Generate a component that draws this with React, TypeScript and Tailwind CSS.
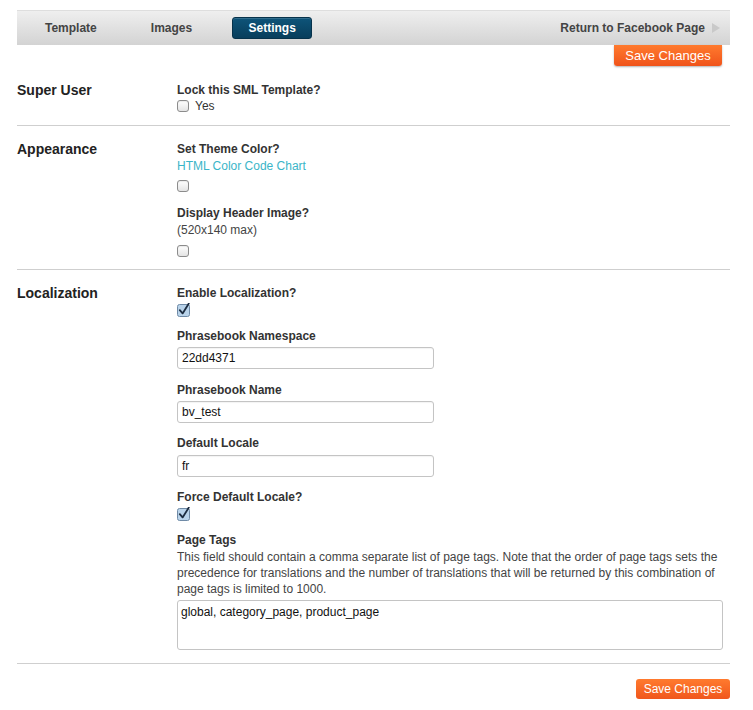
import React from "react";

const font = { fontFamily: '"Liberation Sans", Arial, Helvetica, sans-serif' };

function Checkbox({ checked }: { checked?: boolean }) {
  if (checked) {
    return (
      <svg width="14" height="14" viewBox="0 0 14 14" className="block">
        <rect x="0.5" y="1.5" width="12" height="12" rx="2" fill="#b9d3ea" stroke="#6f8aa6" />
        <path d="M2.8 7.2 L5.6 10.4 L11.8 0.6" fill="none" stroke="#1c2c40" strokeWidth="1.8" strokeLinecap="round" strokeLinejoin="round" />
      </svg>
    );
  }
  return (
    <span className="block w-[12px] h-[12px] rounded-[3px] border border-[#8c8c8c] bg-gradient-to-b from-[#ffffff] to-[#e4e4e4] shadow-[inset_0_1px_1px_rgba(0,0,0,0.08)]" />
  );
}

function Label({ children }: { children: React.ReactNode }) {
  return <div className="h-4 leading-4 text-[12px] font-bold text-[#333]">{children}</div>;
}

function TextInput({ value }: { value: string }) {
  return (
    <div className="w-[257px] h-[22px] border border-[#c4c4c4] rounded-[3px] bg-white flex items-center px-[4px] text-[12px] text-[#111] shadow-[inset_0_1px_1px_rgba(0,0,0,0.05)]">
      {value}
    </div>
  );
}

function Section({
  title,
  children,
  className,
}: {
  title: string;
  children: React.ReactNode;
  className: string;
}) {
  return (
    <div className={`flex ${className}`}>
      <div className="w-[160px] shrink-0 text-[14px] leading-4 font-bold text-[#222]">{title}</div>
      <div className="flex-1">{children}</div>
    </div>
  );
}

export default function App() {
  return (
    <div className="w-[753px] h-[710px] bg-white text-[#333]" style={font}>
      <div className="pt-[10px] pl-[17px] w-[730px]">
        {/* top nav bar */}
        <div className="h-[35px] border-t border-[#dedede] bg-gradient-to-b from-[#efefef] to-[#d3d3d3] flex items-center text-[12px] font-bold text-[#444]">
          <span className="ml-[28px]">Template</span>
          <span className="ml-[54px]">Images</span>
          <span className="ml-[40px] w-[80px] h-[22px] rounded-[3px] bg-gradient-to-b from-[#0e5479] to-[#083e5c] border border-[#06324b] text-white flex items-center justify-center shadow-[inset_0_1px_0_rgba(255,255,255,0.15)]">
            Settings
          </span>
          <span className="ml-auto">Return to Facebook Page</span>
          <svg width="8" height="10" viewBox="0 0 8 10" className="ml-[7px] mr-[10px]">
            <path d="M0 0 L8 5 L0 10 Z" fill="#c9c9c9" />
          </svg>
        </div>

        <div className="flex justify-end pr-[8px]">
          <button className="w-[108px] h-[21px] rounded-b-[3px] bg-gradient-to-b from-[#ff7a2e] to-[#f0531a] text-white text-[13px] leading-[21px] shadow-[0_1px_2px_rgba(0,0,0,0.3)]">
            Save Changes
          </button>
        </div>

        {/* Super User */}
        <Section title="Super User" className="pt-[16px] pb-[11px] border-b border-[#cfcfcf]">
          <Label>Lock this SML Template?</Label>
          <div className="h-4 flex items-center gap-[6px] text-[12px] text-[#333]">
            <Checkbox />
            <span>Yes</span>
          </div>
        </Section>

        {/* Appearance */}
        <Section title="Appearance" className="pt-[15px] pb-[10px] border-b border-[#cfcfcf]">
          <Label>Set Theme Color?</Label>
          <div className="mt-px h-4 leading-4 text-[12px] text-[#3ab5c8]">HTML Color Code Chart</div>
          <div className="mt-[4px] h-4 flex items-center">
            <Checkbox />
          </div>
          <div className="mt-[11px]">
            <Label>Display Header Image?</Label>
          </div>
          <div className="mt-px h-4 leading-4 text-[12px] text-[#444]">(520x140 max)</div>
          <div className="mt-[5px] h-4 flex items-center">
            <Checkbox />
          </div>
        </Section>

        {/* Localization */}
        <Section title="Localization" className="pt-[15px] pb-[13px] border-b border-[#cfcfcf]">
          <Label>Enable Localization?</Label>
          <div className="h-4 flex items-end">
            <Checkbox checked />
          </div>
          <div className="mt-[11px]">
            <Label>Phrasebook Namespace</Label>
          </div>
          <div className="mt-[3px]">
            <TextInput value="22dd4371" />
          </div>
          <div className="mt-[13px]">
            <Label>Phrasebook Name</Label>
          </div>
          <div className="mt-[3px]">
            <TextInput value="bv_test" />
          </div>
          <div className="mt-[12px]">
            <Label>Default Locale</Label>
          </div>
          <div className="mt-[4px]">
            <TextInput value="fr" />
          </div>
          <div className="mt-[12px]">
            <Label>Force Default Locale?</Label>
          </div>
          <div className="h-4 flex items-end">
            <Checkbox checked />
          </div>
          <div className="mt-[11px]">
            <Label>Page Tags</Label>
          </div>
          <div className="mt-px text-[12px] leading-4 text-[#444] whitespace-nowrap">
            This field should contain a comma separate list of page tags. Note that the order of page tags sets the
            <br />
            precedence for translations and the number of translations that will be returned by this combination of
            <br />
            page tags is limited to 1000.
          </div>
          <div className="mt-[3px] w-[546px] h-[50px] border border-[#c4c4c4] rounded-[3px] bg-white px-[3px] pt-[3px] text-[12px] leading-4 text-[#111]">
            global, category_page, product_page
          </div>
        </Section>

        <div className="flex justify-end pt-[15px]">
          <button className="w-[94px] h-[20px] rounded-[3px] bg-gradient-to-b from-[#ff7a2e] to-[#f0561c] text-white text-[12px] leading-[20px]">
            Save Changes
          </button>
        </div>
      </div>
    </div>
  );
}
